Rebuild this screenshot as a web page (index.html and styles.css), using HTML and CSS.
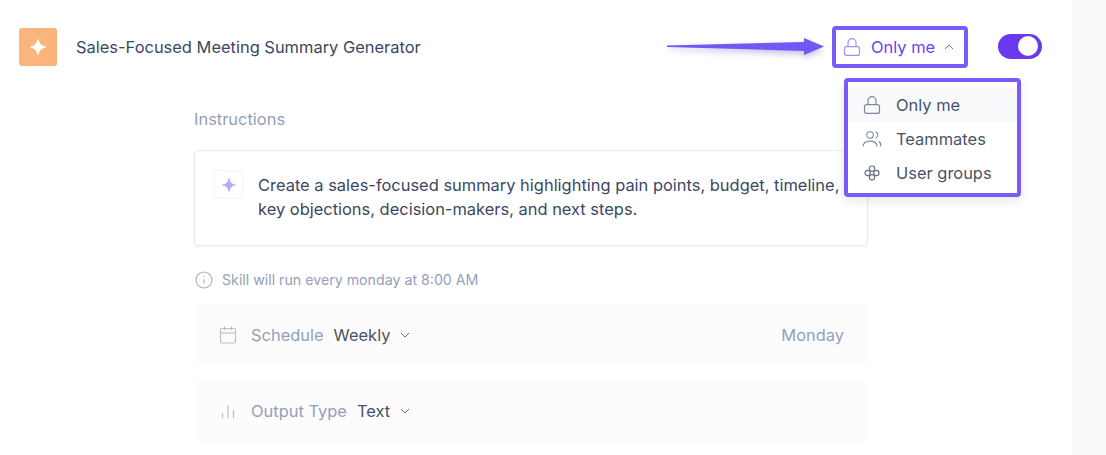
FILE: index.html
```html
<!DOCTYPE html>
<html lang="en">
<head>
    <meta charset="UTF-8">
    <meta name="viewport" content="width=device-width, initial-scale=1.0">
    <title>Skill Settings</title>
    <link rel="stylesheet" href="styles.css">
</head>
<body>
    <div class="page">
        <div class="main">
            <div class="header">
                <div class="skill-icon">
                    <svg width="18" height="18" viewBox="0 0 18 18"><path d="M9 2C9.600 6 12 8.400 16 9 12 9.600 9.600 12 9 16 8.400 12 6 9.600 2 9 6 8.400 8.400 6 9 2Z" fill="#fff" stroke="#fff" stroke-width="1.500" stroke-linejoin="round"/></svg>
                </div>
                <div class="skill-title">Sales-Focused Meeting Summary Generator</div>
                <div class="access">
                    <svg class="arrow" width="170" height="30" viewBox="0 0 170 30"><path d="M2 11.500 139 8V4L159 12.500 139 21V17L2 13Z" fill="#7357f5"/></svg>
                    <button class="access-btn">
                        <svg class="icon" width="18" height="18" viewBox="0 0 18 18" fill="none" stroke="#a78bfa" stroke-width="1.200"><rect x="1.500" y="8.600" width="15" height="8.800" rx="2"/><path d="M5 8.600V4.700a4 4 0 0 1 8 0v3.900"/></svg>
                        <span>Only me</span>
                        <svg class="chevron" width="10" height="6" viewBox="0 0 10 6" fill="none" stroke="#7c5cf5" stroke-width="1"><path d="M1 5l4-4 4 4"/></svg>
                    </button>
                    <div class="menu">
                        <div class="menu-item active">
                            <svg width="18" height="18" viewBox="0 0 18 18" fill="none" stroke="#7d8799" stroke-width="1.200"><rect x="1.500" y="8.600" width="15" height="8.800" rx="2"/><path d="M5 8.600V4.700a4 4 0 0 1 8 0v3.900"/></svg>
                            <span>Only me</span>
                        </div>
                        <div class="menu-item">
                            <svg class="wide" width="20" height="18" viewBox="0 0 20 18" fill="none" stroke="#7d8799" stroke-width="1.100"><circle cx="8" cy="5" r="3.300"/><path d="M1 16.500c0-3.400 3-5.400 7-5.400s7 2 7 5.400M13.500 1.700c1.600.7 2.400 1.900 2.400 3.300s-.8 2.600-2.400 3.300M16.800 11.600c1.400.8 2.200 2.500 2.200 4.900"/></svg>
                            <span>Teammates</span>
                        </div>
                        <div class="menu-item">
                            <svg width="18" height="18" viewBox="0 0 18 18" fill="none" stroke="#667085" stroke-width="1.200"><circle cx="9" cy="4.700" r="2.700"/><circle cx="13.300" cy="9" r="2.700"/><circle cx="9" cy="13.300" r="2.700"/><circle cx="4.700" cy="9" r="2.700"/></svg>
                            <span>User groups</span>
                        </div>
                    </div>
                </div>
                <div class="toggle"><div class="toggle-knob"></div></div>
            </div>

            <div class="content">
                <div class="label">Instructions</div>
                <div class="card">
                    <div class="card-icon">
                        <svg width="14" height="14" viewBox="0 0 18 18"><path d="M9 1C9.600 6 12 8.400 17 9 12 9.600 9.600 12 9 17 8.400 12 6 9.600 1 9 6 8.400 8.400 6 9 1Z" fill="#b9a6fb" stroke="#b9a6fb" stroke-width="1.500" stroke-linejoin="round"/></svg>
                    </div>
                    <p>Create a sales-focused summary highlighting pain points, budget, timeline, key objections, decision-makers, and next steps.</p>
                </div>
                <div class="info">
                    <svg width="18" height="18" viewBox="0 0 18 18" fill="none" stroke="#a6afbf" stroke-width="1.100"><circle cx="9" cy="9" r="8"/><path d="M9 8.300v4.200M9 5.300v1"/></svg>
                    <span>Skill will run every monday at 8:00 AM</span>
                </div>
                <div class="row schedule">
                    <svg width="18" height="18" viewBox="0 0 18 18" fill="none" stroke="#b4bccb" stroke-width="1.100"><rect x="1.500" y="2.500" width="15" height="14.500" rx="1.500"/><path d="M1.500 7h15M5.500 .5v3.500M12.500 .5v3.500"/></svg>
                    <span class="row-label">Schedule</span>
                    <span class="row-value">Weekly</span>
                    <svg class="chevron" width="10" height="6" viewBox="0 0 10 6" fill="none" stroke="#667085" stroke-width="1"><path d="M1 1l4 4 4-4"/></svg>
                    <span class="row-right">Monday</span>
                </div>
                <div class="row">
                    <svg width="18" height="18" viewBox="0 0 18 18" fill="none" stroke="#b4bccb" stroke-width="1.200"><path d="M3.500 11v5M9 3v13M14.500 8v8"/></svg>
                    <span class="row-label">Output Type</span>
                    <span class="row-value">Text</span>
                    <svg class="chevron" width="10" height="6" viewBox="0 0 10 6" fill="none" stroke="#667085" stroke-width="1"><path d="M1 1l4 4 4-4"/></svg>
                </div>
            </div>
        </div>
        <div class="side"></div>
    </div>
</body>
</html>
```

FILE: styles.css
```css
* {
    margin: 0;
    padding: 0;
    box-sizing: border-box;
}

body {
    font-family: Inter, 'Liberation Sans', sans-serif;
    font-size: 16.45px;
    line-height: 24px;
    color: #344054;
    background: #fff;
    overflow: hidden;
}

.page {
    display: flex;
    height: 455px;
    overflow: hidden;
}

.main {
    flex: 1;
}

.side {
    width: 34px;
    background: #fafafa;
}

.header {
    display: flex;
    align-items: center;
    height: 38px;
    margin-top: 28px;
    padding: 0 30px 0 19px;
}

.skill-icon {
    display: flex;
    align-items: center;
    justify-content: center;
    width: 38px;
    height: 38px;
    background: #fbb47c;
    border-radius: 3px;
}

.skill-title {
    flex: 1;
    margin-left: 19px;
    color: #3b4763;
}

.access {
    position: relative;
    margin-right: 30px;
}

.arrow {
    position: absolute;
    top: 8px;
    left: -167px;
    filter: drop-shadow(0 3px 3px rgba(60, 40, 160, 0.3));
}

.access-btn {
    display: flex;
    align-items: center;
    width: 136px;
    height: 42px;
    padding-left: 7px;
    font: inherit;
    color: #6d3ff0;
    background: #fff;
    border: 4px solid #7a5af8;
    border-radius: 4px;
}

.access-btn .icon {
    margin-right: 10px;
}

.access-btn .chevron {
    margin-left: 9px;
}

.menu {
    position: absolute;
    top: 52px;
    left: 12px;
    width: 177px;
    height: 119px;
    padding: 6px 0 3px;
    color: #475467;
    background: #fff;
    border: 4px solid #7a5af8;
    border-radius: 4px;
    box-shadow: 0 4px 10px rgba(16, 24, 40, 0.1);
    z-index: 2;
}

.menu-item {
    display: flex;
    align-items: center;
    gap: 15px;
    height: 34px;
    padding-left: 15px;
}

.menu-item.active {
    background: #f9fafb;
}

.menu-item .wide {
    margin: 0 -1px;
}

.toggle {
    display: flex;
    justify-content: flex-end;
    align-items: center;
    width: 44px;
    height: 25px;
    margin-bottom: 2px;
    padding-right: 4px;
    background: #6938ef;
    border-radius: 13px;
}

.toggle-knob {
    width: 20px;
    height: 20px;
    background: #fff;
    border-radius: 50%;
}

.content {
    width: 674px;
    margin: 41px 0 0 194px;
}

.label {
    margin-bottom: 19px;
    color: #94a0b8;
}

.card {
    display: flex;
    align-items: flex-start;
    height: 96px;
    padding: 19px 19px 0;
    background: #fff;
    border: 1px solid #eaecf0;
    border-radius: 4px;
    box-shadow: 0 1px 2px rgba(16, 24, 40, 0.05);
}

.card-icon {
    flex: none;
    display: flex;
    align-items: center;
    justify-content: center;
    width: 29px;
    height: 29px;
    margin-right: 15px;
    border: 1px solid #f2f4f7;
    border-radius: 5px;
}

.card p {
    margin-top: 3px;
    color: #3b4763;
}

.info {
    display: flex;
    align-items: center;
    gap: 9px;
    height: 24px;
    margin: 22px 0 11px 1px;
    font-size: 14.2px;
    color: #94a0b8;
}

.row {
    display: flex;
    align-items: center;
    height: 62px;
    margin-bottom: 15px;
    padding: 0 24px 0 25px;
    background: #fcfcfc;
    border-radius: 5px;
}

.row.schedule {
    height: 63px;
    margin-bottom: 14px;
}

.row-label {
    margin: 0 10px 0 14px;
    color: #94a0b8;
}

.row-value {
    margin-right: 10px;
    color: #475467;
}

.row-right {
    margin-left: auto;
    color: #94a0b8;
}
```
